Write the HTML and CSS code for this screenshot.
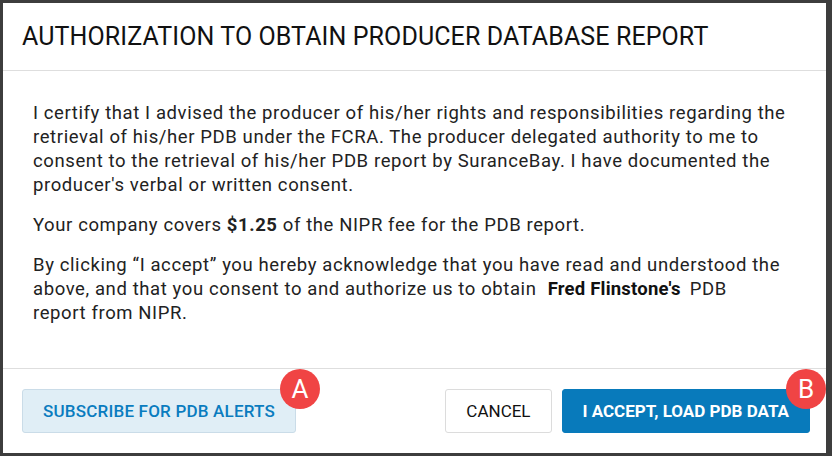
FILE: index.html
```html
<!DOCTYPE html>
<html lang="en">
<head>
    <meta charset="UTF-8">
    <meta name="viewport" content="width=device-width, initial-scale=1.0">
    <title>Authorization</title>
    <link rel="stylesheet" href="styles.css">
</head>
<body>
<div class="dialog">
    <div class="dialog-header">
        <h1>AUTHORIZATION TO OBTAIN PRODUCER DATABASE REPORT</h1>
    </div>

    <div class="dialog-body">
        <p>I certify that I advised the producer of his/her rights and responsibilities regarding the retrieval of his/her PDB under the FCRA. The producer delegated authority to me to consent to the retrieval of his/her PDB report by SuranceBay. I have documented the producer's verbal or written consent.</p>
        <p>Your company covers <strong>$1.25</strong> of the NIPR fee for the PDB report.</p>
        <p>By clicking &ldquo;I accept&rdquo; you hereby acknowledge that you have read and understood the above, and that you consent to and authorize us to obtain <strong class="name">Fred Flinstone's</strong> PDB report&nbsp;from NIPR.</p>
    </div>

    <div class="dialog-footer">
        <div class="btn-wrap">
            <button class="btn btn-light">SUBSCRIBE FOR PDB ALERTS</button>
            <span class="badge">A</span>
        </div>
        <div class="footer-right">
            <button class="btn btn-default">CANCEL</button>
            <div class="btn-wrap">
                <button class="btn btn-primary">I ACCEPT, LOAD PDB DATA</button>
                <span class="badge">B</span>
            </div>
        </div>
    </div>
</div>
</body>
</html>
```

FILE: styles.css
```css
body {
    margin: 0;
    padding: 3px 6px 3px 3px;
    background: #3d3d3d;
    font-family: Roboto, "Liberation Sans", Arial, sans-serif;
}
.dialog {
    background: #fff;
    height: 450px;
    display: flex;
    flex-direction: column;
}
.dialog-header {
    height: 67px;
    border-bottom: 1px solid #dedede;
    display: flex;
    align-items: center;
    padding: 0 19px;
}
h1 {
    margin: 0;
    font-size: 25px;
    font-weight: 400;
    letter-spacing: 0.1px;
    color: #111;
}
.dialog-body {
    flex: 1;
    padding: 30px 36px 0 30px;
    color: #222;
    font-size: 18.5px;
    letter-spacing: 0.6px;
    line-height: 24px;
}
.dialog-body p {
    margin: 0 0 16px 0;
}
.dialog-body strong {
    font-weight: 700;
}
.dialog-body .name {
    display: inline-block;
    font-size: 18.5px;
    letter-spacing: 0.2px;
    color: #111;
    margin: 0 4px 0 6px;
}
.dialog-footer {
    border-top: 1px solid #dedede;
    display: flex;
    justify-content: space-between;
    align-items: center;
    padding: 20px 16px 20px 19px;
}
.footer-right {
    display: flex;
    gap: 10px;
}
.btn-wrap {
    position: relative;
}
.btn {
    height: 44px;
    padding: 0 20px;
    border-radius: 3px;
    font-family: Roboto, "Liberation Sans", Arial, sans-serif;
    font-size: 17px;
    font-weight: 500;
    cursor: pointer;
    display: block;
}
.btn-light {
    background: #e0eef6;
    border: 1px solid #cadce8;
    color: #0a7cbf;
    letter-spacing: 0.2px;
}
.btn-default {
    background: #fff;
    border: 1px solid #dcdcdc;
    color: #111;
    font-weight: 400;
}
.btn-primary {
    background: #087abb;
    border: 1px solid #087abb;
    color: #fff;
    font-weight: 700;
}
.badge {
    position: absolute;
    top: -20px;
    right: -24px;
    width: 40px;
    height: 40px;
    border-radius: 50%;
    background: #f04444;
    color: #fff;
    font-size: 26px;
    line-height: 40px;
    text-align: center;
}
.footer-right .badge {
    right: -16px;
}
```
